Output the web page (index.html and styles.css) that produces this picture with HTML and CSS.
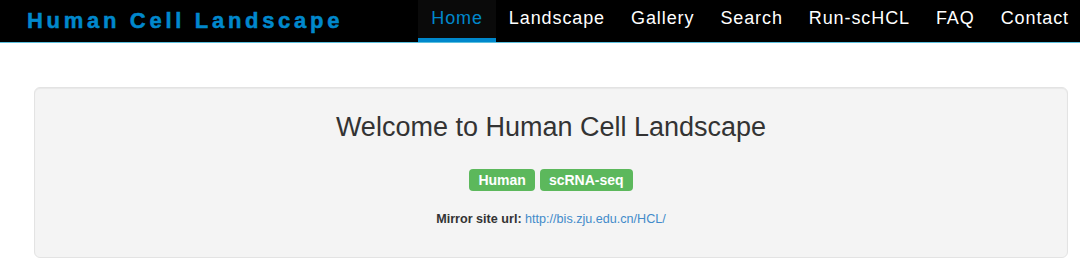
FILE: index.html
```html
<!DOCTYPE html>
<html lang="en">
<head>
  <meta charset="UTF-8" />
  <meta name="viewport" content="width=device-width, initial-scale=1.0" />
  <title>Human Cell Landscape</title>
  <link rel="stylesheet" href="styles.css">
</head>
<body>
  <header class="navbar">
    <a class="brand" href="#">Human Cell Landscape</a>
    <nav class="nav-links">
      <a class="active" href="#">Home</a>
      <a href="#">Landscape</a>
      <a href="#">Gallery</a>
      <a href="#">Search</a>
      <a href="#">Run-scHCL</a>
      <a href="#">FAQ</a>
      <a href="#">Contact</a>
    </nav>
  </header>

  <main>
    <div class="well">
      <h1>Welcome to Human Cell Landscape</h1>
      <div class="labels">
        <span class="label">Human</span>
        <span class="label">scRNA-seq</span>
      </div>
      <p class="mirror"><b>Mirror site url:</b> <a href="http://bis.zju.edu.cn/HCL/">http://bis.zju.edu.cn/HCL/</a></p>
    </div>
  </main>
</body>
</html>
```

FILE: styles.css
```css
body {
  font-family: "Liberation Sans", Arial, sans-serif;
  margin: 0;
  padding: 0;
  color: #333;
  background: #fff;
}
a {
  text-decoration: none;
}
.navbar {
  display: flex;
  justify-content: space-between;
  align-items: stretch;
  height: 42px;
  background-color: #000;
  border-bottom: 1px solid #5bc0de;
}
.brand {
  display: flex;
  align-items: center;
  padding-left: 27px;
  font-size: 22px;
  font-weight: bold;
  letter-spacing: 3.7px;
  color: #0088cc;
  -webkit-text-stroke: 0.5px #0088cc;
}
.nav-links {
  display: flex;
}
.nav-links a {
  display: flex;
  align-items: center;
  padding: 0 13px 2px;
  font-size: 18px;
  letter-spacing: 0.9px;
  color: #fff;
  border-bottom: 4px solid transparent;
}
.nav-links a:last-child {
  padding-right: 11px;
}
.nav-links a.active {
  color: #0088cc;
  background-color: #0a0a0a;
  border-bottom-color: #0088cc;
}
main {
  margin: 44px 12px 0 34px;
}
.well {
  height: 171px;
  box-sizing: border-box;
  padding: 19px;
  background-color: #f4f4f4;
  border: 1px solid #e3e3e3;
  border-radius: 6px;
  box-shadow: inset 0 1px 1px rgba(0,0,0,0.05);
  text-align: center;
}
h1 {
  margin: 2px 0 0;
  font-size: 27px;
  font-weight: normal;
  line-height: 36px;
}
.labels {
  margin-top: 24px;
  display: flex;
  justify-content: center;
  gap: 5px;
}
.label {
  padding: 3px 9px;
  font-size: 14px;
  line-height: 16px;
  font-weight: bold;
  color: #fff;
  background-color: #5cb85c;
  border-radius: 4px;
}
.mirror {
  margin: 20px 0 0;
  font-size: 12.6px;
  line-height: 16px;
}
.mirror a {
  color: #428bca;
}
```
